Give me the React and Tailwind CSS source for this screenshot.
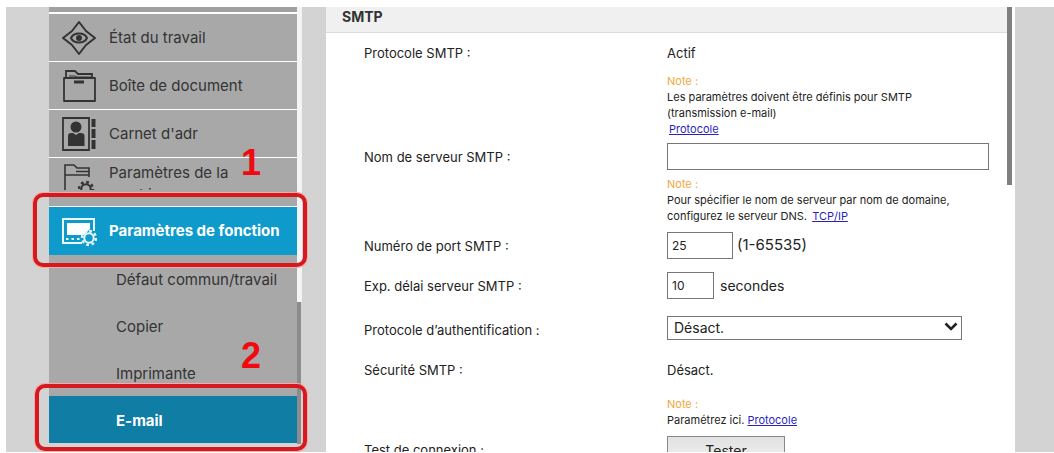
import React from "react";

function StatusIcon() {
  return (
    <svg viewBox="0 0 36 36" className="h-9 w-9" fill="none" stroke="#333" strokeWidth="2">
      <path d="M18 2 L25 11 L34 18 L25 25 L18 34 L11 25 L2 18 L11 11 Z" strokeLinejoin="round" />
      <path d="M10 18 Q12 13.500 18 13.500 Q24 13.500 26 18 Q24 22.500 18 22.500 Q12 22.500 10 18 Z" />
      <circle cx="18" cy="18" r="3" fill="#333" stroke="none" />
    </svg>
  );
}

function BoxIcon() {
  return (
    <svg viewBox="0 0 36 36" className="h-9 w-9" fill="none" stroke="#333" strokeWidth="1.800">
      <path d="M3 10 H34 V33 H3 Z" strokeLinejoin="round" />
      <path d="M5 10 V3 H14 L17 6 H31 V10" />
      <path d="M8 8 H14 L16 9 H31" strokeWidth="1" />
      <path d="M13 14 H23" strokeWidth="3" />
    </svg>
  );
}

function ContactsIcon() {
  return (
    <svg viewBox="0 0 36 36" className="h-9 w-9" fill="none" stroke="#333" strokeWidth="1.800">
      <path d="M2 2 H28 V34 H2 Z" />
      <circle cx="15" cy="11" r="5.500" fill="#333" stroke="none" />
      <path d="M7 30 V20 Q7 17 10 17 H12 L15 19 L18 17 H20 Q23.500 17 23.500 20 V30 Z" fill="#333" stroke="none" />
      <path d="M32.500 3 V11 M32.500 13 V22 M32.500 24 V33" strokeWidth="4" />
    </svg>
  );
}

function Gear({ color, hole }) {
  return (
    <g>
      <circle cx="0" cy="0" r="6.900" fill="none" stroke={color} strokeWidth="2.600" strokeDasharray="2.710 2.710" />
      <circle cx="0" cy="0" r="4.700" fill={hole} stroke={color} strokeWidth="2" />
    </g>
  );
}

function MachineIcon() {
  return (
    <svg viewBox="0 0 36 36" className="h-9 w-9" fill="none" stroke="#333" strokeWidth="1.600">
      <path d="M4 34 V3 H13 L16 6 H28 V15" />
      <path d="M4 13 H28 M15 9.500 H28" />
      <path d="M4 34 H18" />
      <g transform="translate(25 27)">
        <Gear color="#333" hole="#a8a8a8" />
      </g>
    </svg>
  );
}

function FunctionIcon() {
  return (
    <svg viewBox="0 0 36 36" className="h-9 w-9" fill="none" stroke="#e8f7fd" strokeWidth="2">
      <path d="M33 18 V6 H2 V30 H21" />
      <path d="M6 10 H29 V16 L23 22 H6 Z" fill="#fff" stroke="none" />
      <path d="M5 26 H7.500 M10.500 26 H13 M16 26 H18.500" />
      <g transform="translate(28 25)">
        <Gear color="#e8f7fd" hole="#0e9bcb" />
      </g>
    </svg>
  );
}

function MenuItem({ icon, children }) {
  return (
    <li className="border-b border-white">
      <a href="#" className="flex h-[47px] items-center gap-3 bg-[#a8a8a8] pl-3 text-[#333]">
        {icon}
        <span className="pt-0.5">{children}</span>
      </a>
    </li>
  );
}

function SubItem({ children }) {
  return (
    <li>
      <a href="#" className="flex h-[47px] items-center bg-[#a8a8a8] pt-1 pl-[67px] text-[#333]">
        {children}
      </a>
    </li>
  );
}

function Callout({ className }) {
  return (
    <span
      className={
        "pointer-events-none absolute z-10 rounded-[10px] border-4 border-[#d41a1e] ring-1 ring-[#f7aaa8] " + className
      }
    />
  );
}

function Sidebar() {
  return (
    <aside className="flex w-[320px] shrink-0 bg-[#d3d3d3] pl-[43px] text-[15px]">
      <nav className="w-[248px]">
        <ul>
          <li className="h-[7px] border-b-2 border-white bg-[#a0a0a0]" />
          <MenuItem icon={<StatusIcon />}>État du travail</MenuItem>
          <MenuItem icon={<BoxIcon />}>Boîte de document</MenuItem>
          <MenuItem icon={<ContactsIcon />}>Carnet d'adr</MenuItem>
          <li className="border-b border-white bg-[#a8a8a8] pb-4">
            <a href="#" className="flex h-8 items-start gap-3 overflow-hidden pl-3 text-[#333]">
              <span className="pt-1">
                <MachineIcon />
              </span>
              <span className="w-[130px] pt-1 leading-[22px]">Paramètres de la machine</span>
            </a>
          </li>
          <li className="relative">
            <a href="#" className="flex h-12 items-center gap-3 bg-[#0e9bcb] pl-3 font-bold text-white">
              <FunctionIcon />
              <span className="whitespace-nowrap">Paramètres de fonction</span>
            </a>
            <Callout className="-top-3.5 -right-2.5 -bottom-3 -left-4" />
            <b className="absolute -top-16 right-9 font-['Liberation_Sans',sans-serif] text-4xl leading-10 text-[#f00a0f]">1</b>
          </li>
          <SubItem>Défaut commun/travail</SubItem>
          <SubItem>Copier</SubItem>
          <SubItem>Imprimante</SubItem>
          <li className="relative">
            <a href="#" className="flex h-[47px] items-center bg-[#107da5] pt-1 pl-[67px] font-bold text-white">
              E-mail
            </a>
            <Callout className="-top-3 -right-2.5 -bottom-2 -left-3.5" />
            <b className="absolute -top-15 right-9 font-['Liberation_Sans',sans-serif] text-4xl leading-10 text-[#f00a0f]">2</b>
          </li>
        </ul>
      </nav>
      <div className="w-[5px]">
        <div className="h-[295px] bg-[#f4f4f4]" />
        <div className="h-[142px] w-1 bg-[#8c8c8c]" />
      </div>
    </aside>
  );
}

function Row({ label, htmlFor, className, children }) {
  return (
    <div className={"grid grid-cols-[303px_1fr] items-start " + className}>
      {htmlFor ? (
        <label htmlFor={htmlFor} className="leading-7">
          {label}
        </label>
      ) : (
        <span className="leading-5">{label}</span>
      )}
      <div>{children}</div>
    </div>
  );
}

function Note({ className, children }) {
  return (
    <div className={"text-[11px] leading-4 " + className}>
      <p className="text-[#f0a83c]">Note :</p>
      {children}
    </div>
  );
}

const field = "border border-[#767676] bg-white text-[#222]";
const link = "text-[#2a1fc0] underline";

export default function App() {
  return (
    <div className="flex h-screen overflow-hidden bg-white pt-[7px] pb-px pl-1.5 font-['Inter',sans-serif] text-[13px] text-[#222]">
      <div className="flex min-w-0 flex-1 overflow-hidden">
        <Sidebar />
        <main className="min-w-0 flex-1">
          <h2 className="h-[26px] border-b border-[#dcdcdc] bg-[#f0f0f0] pl-4 text-[14px] leading-5 font-bold text-[#333]">SMTP</h2>
          <form className="pr-[18px] pl-[38px]">
            <Row label="Protocole SMTP :" className="pt-2.5">
              <p className="leading-5">Actif</p>
              <Note className="pt-2.5">
                <p>
                  Les paramètres doivent être définis pour SMTP
                  <br />
                  (transmission e-mail)
                </p>
                <a href="#" className={"ml-0.5 " + link}>
                  Protocole
                </a>
              </Note>
            </Row>
            <Row label="Nom de serveur SMTP :" htmlFor="host" className="pt-1.5">
              <input id="host" type="text" className={"block h-[27px] w-full px-1 " + field} />
              <Note className="pt-1.5">
                <p>
                  Pour spécifier le nom de serveur par nom de domaine,
                  <br />
                  configurez le serveur DNS.{" "}
                  <a href="#" className={"ml-0.5 " + link}>
                    TCP/IP
                  </a>
                </p>
              </Note>
            </Row>
            <Row label="Numéro de port SMTP :" htmlFor="port" className="pt-2">
              <div className="flex items-center gap-1 text-[15px]">
                <input id="port" type="text" defaultValue="25" className={"h-[27px] w-[66px] px-1 text-[12px] " + field} />
                <span>(1-65535)</span>
              </div>
            </Row>
            <Row label="Exp. délai serveur SMTP :" htmlFor="timeout" className="pt-3">
              <div className="flex items-center gap-1.5 text-[14px]">
                <input id="timeout" type="text" defaultValue="10" className={"h-[27px] w-[47px] px-1 text-[12px] " + field} />
                <span>secondes</span>
              </div>
            </Row>
            <Row label="Protocole d’authentification :" htmlFor="auth" className="pt-4">
              <div className="relative w-[295px]">
                <select id="auth" className={"block h-6 w-full appearance-none px-1.5 text-[14px] leading-5 " + field}>
                  <option>Désact.</option>
                </select>
                <svg
                  viewBox="0 0 14 10"
                  className="pointer-events-none absolute top-1.5 right-1 h-2.5 w-3.5"
                  fill="none"
                  stroke="#222"
                  strokeWidth="2.600"
                >
                  <path d="M1.500 1.500 L7 7 L12.500 1.500" />
                </svg>
              </div>
            </Row>
            <Row label="Sécurité SMTP :" className="pt-4">
              <p className="leading-5">Désact.</p>
              <Note className="pt-4">
                <p>
                  Paramétrez ici.{" "}
                  <a href="#" className={link}>
                    Protocole
                  </a>
                </p>
              </Note>
            </Row>
            <Row label="Test de connexion :" htmlFor="test" className="pt-2">
              <button
                id="test"
                type="button"
                className="h-7 w-[118px] border border-[#888] bg-linear-to-b from-[#e2e2e2] to-[#f0f0f0] text-[14px]"
              >
                Tester
              </button>
            </Row>
          </form>
        </main>
        <div className="w-2 bg-white">
          <div className="h-[178px] w-[5px] bg-[#808080]" />
        </div>
        <div className="w-[39px] bg-[#d3d3d3]" />
      </div>
    </div>
  );
}
